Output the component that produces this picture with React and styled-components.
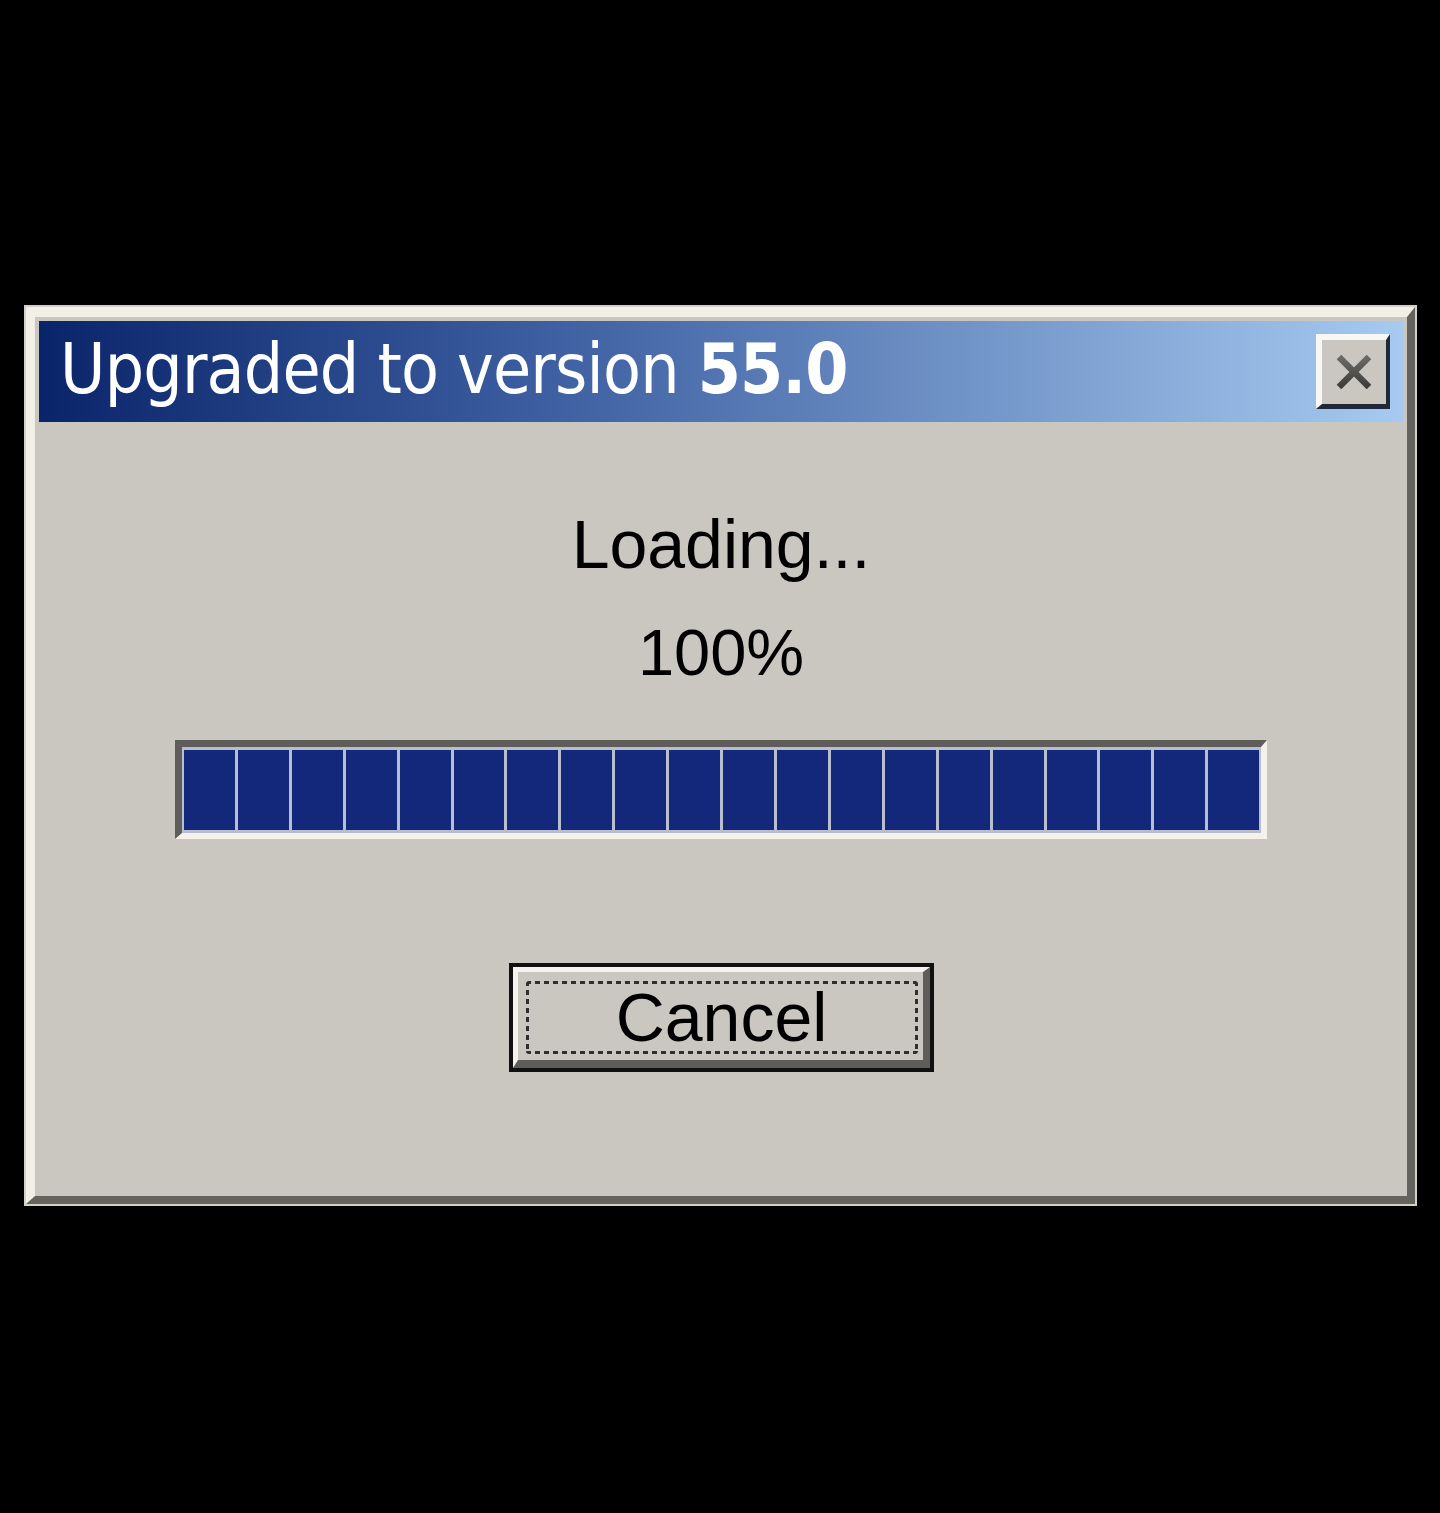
import React from 'react';
import styled, { createGlobalStyle } from 'styled-components';

const GlobalStyle = createGlobalStyle`
  html, body {
    margin: 0;
    padding: 0;
    background: #000;
  }
`;

const Page = styled.div`
  min-height: 1513px;
  padding: 305px 0 0 24px;
  box-sizing: border-box;
  background: #000;
`;

const Window = styled.div`
  width: 1393px;
  height: 901px;
  box-sizing: border-box;
  border: 2px solid #d2d0c8;
`;

const WindowBevel = styled.div`
  height: 100%;
  box-sizing: border-box;
  border-style: solid;
  border-width: 10px 8px 8px 9px;
  border-color: #f1efe6 #65635e #65635e #f1efe6;
  background: #cac7c0;
  padding: 4px;
  display: flex;
  flex-direction: column;
`;

const TitleBar = styled.div`
  height: 101px;
  flex-shrink: 0;
  display: flex;
  align-items: center;
  justify-content: space-between;
  padding: 0 13px 0 21px;
  box-sizing: border-box;
  background: linear-gradient(to right, #0a246a 0%, #3a5b9e 35%, #a6caf0 100%);
`;

const Title = styled.div`
  font-family: "DejaVu Sans Condensed", "DejaVu Sans", Tahoma, sans-serif;
  font-size: 69px;
  line-height: 69px;
  letter-spacing: -0.8px;
  padding-bottom: 4px;
  color: #fff;
  white-space: nowrap;

  b {
    font-weight: bold;
  }
`;

const CloseButton = styled.button`
  width: 74px;
  height: 75px;
  box-sizing: border-box;
  padding: 0;
  border-style: solid;
  border-width: 6px 4px 5px 6px;
  border-color: #f7f7f4 #1e2838 #1e2838 #f7f7f4;
  background: #cac7c0;
  display: flex;
  align-items: center;
  justify-content: center;
  cursor: pointer;
`;

const Content = styled.div`
  flex: 1;
  display: flex;
  flex-direction: column;
  align-items: center;
`;

const Message = styled.div`
  font-family: "Liberation Sans", Arial, sans-serif;
  font-size: ${(p) => p.$size}px;
  line-height: ${(p) => p.$size}px;
  color: #000;
  margin-top: ${(p) => p.$top}px;
`;

const Track = styled.div`
  width: 1092px;
  height: 99px;
  box-sizing: border-box;
  margin-top: 55px;
  border-style: solid;
  border-width: 7px 6px 6px 7px;
  border-color: #5e5d59 #f4f2ea #f4f2ea #5e5d59;
  background: #b8bece;
  padding: 3px 2px;
  display: flex;
  gap: 3px;
`;

const Block = styled.div`
  flex: 1;
  background: #13287a;
`;

const CancelButton = styled.button`
  width: 425px;
  height: 109px;
  box-sizing: border-box;
  margin-top: 124px;
  padding: 0;
  border: 4px solid #111;
  background: #cac7c0;
  cursor: pointer;
`;

const CancelBevel = styled.div`
  height: 100%;
  box-sizing: border-box;
  border-style: solid;
  border-width: 5px 7px 8px 5px;
  border-color: #f5f3ec #5e5d59 #5e5d59 #f5f3ec;
  padding: 9px 5px 6px 8px;
  display: flex;
`;

const dashH = 'repeating-linear-gradient(to right, #2f2f2f 0 5px, transparent 5px 9px)';
const dashV = 'repeating-linear-gradient(to bottom, #2f2f2f 0 5px, transparent 5px 9px)';

const FocusRing = styled.div`
  flex: 1;
  padding: 3px;
  border-radius: 3px;
  background:
    ${dashH} left top / 100% 3px no-repeat,
    ${dashH} left bottom / 100% 3px no-repeat,
    ${dashV} left top / 3px 100% no-repeat,
    ${dashV} right top / 3px 100% no-repeat;
  display: flex;
  align-items: center;
  justify-content: center;
  font-family: "Liberation Sans", Arial, sans-serif;
  font-size: 68px;
  line-height: 67px;
  color: #000;
`;

function CloseIcon() {
  return (
    <svg width="36" height="34" viewBox="0 0 36 34">
      <defs>
        <linearGradient id="xg" x1="0" y1="0" x2="0" y2="1">
          <stop offset="0" stopColor="#6a6a67" />
          <stop offset="1" stopColor="#3c3c3a" />
        </linearGradient>
      </defs>
      <g stroke="url(#xg)" strokeWidth="6.5" strokeLinecap="butt">
        <line x1="3" y1="2" x2="33" y2="32" />
        <line x1="33" y1="2" x2="3" y2="32" />
      </g>
    </svg>
  );
}

export default function App() {
  const blocks = Array.from({ length: 20 });

  return (
    <>
      <GlobalStyle />
      <Page>
        <Window>
          <WindowBevel>
            <TitleBar>
              <Title>
                Upgraded to version <b>55.0</b>
              </Title>
              <CloseButton aria-label="Close">
                <CloseIcon />
              </CloseButton>
            </TitleBar>
            <Content>
              <Message $size={68} $top={88}>Loading...</Message>
              <Message $size={65} $top={42}>100%</Message>
              <Track>
                {blocks.map((_, i) => (
                  <Block key={i} />
                ))}
              </Track>
              <CancelButton>
                <CancelBevel>
                  <FocusRing>Cancel</FocusRing>
                </CancelBevel>
              </CancelButton>
            </Content>
          </WindowBevel>
        </Window>
      </Page>
    </>
  );
}
